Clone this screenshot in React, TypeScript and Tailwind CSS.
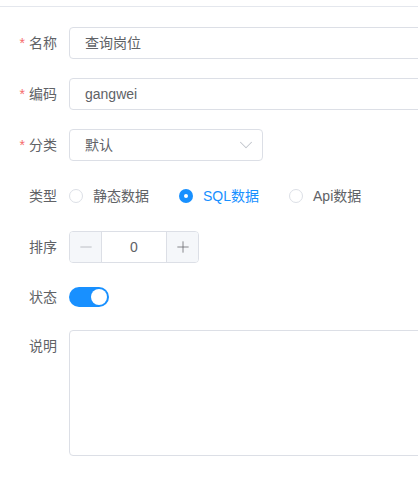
import { ChevronDown, Minus, Plus } from "lucide-react";

interface IFieldProps {
  label: string;
  required?: boolean;
  rowClass?: string;
  children: React.ReactNode;
}

const Field = ({ label, required = false, rowClass = "", children }: IFieldProps) => {
  return (
    <div className={`flex items-start mb-[19px] ${rowClass}`}>
      <label className="w-[69px] shrink-0 pr-3 text-right text-[14px] leading-[32px] text-[#606266]">
        {required && <span className="mr-1 text-[#f56c6c]">*</span>}
        {label}
      </label>
      <div className="flex-1 min-w-0">{children}</div>
    </div>
  );
};

const radios = ["静态数据", "SQL数据", "Api数据"];

export default function App() {
  const checked = "SQL数据";

  return (
    <div
      className="w-[418px] h-[482px] overflow-hidden bg-white"
      style={{ fontFamily: '"Helvetica Neue", "Liberation Sans", "Noto Sans CJK SC", sans-serif' }}
    >
      <div className="h-[7px] border-b border-[#e4e7ed]" />
      <div className="pt-5">
        <Field label="名称" required>
          <div className="w-[400px] h-8 rounded border border-[#dcdfe6] px-[15px] text-[14px] leading-[30px] text-[#606266]">
            查询岗位
          </div>
        </Field>

        <Field label="编码" required>
          <div className="w-[400px] h-8 rounded border border-[#dcdfe6] px-[15px] text-[14px] leading-[30px] text-[#606266]">
            gangwei
          </div>
        </Field>

        <Field label="分类" required>
          <div className="flex items-center justify-between w-[194px] h-8 rounded border border-[#dcdfe6] pl-[15px] pr-[5px] text-[14px] text-[#606266]">
            <span>默认</span>
            <ChevronDown size={22} strokeWidth={1.1} className="text-[#c0c4cc]" />
          </div>
        </Field>

        <Field label="类型">
          <div className="flex items-center h-8">
            {radios.map((item) => {
              const on = item === checked;
              return (
                <div key={item} className="flex items-center mr-[30px]">
                  {on ? (
                    <span className="grid place-content-center w-[14px] h-[14px] rounded-full bg-[#1890ff]">
                      <span className="w-1 h-1 rounded-full bg-white" />
                    </span>
                  ) : (
                    <span className="w-[14px] h-[14px] rounded-full border border-[#dcdfe6] bg-white" />
                  )}
                  <span
                    className={`pl-[10px] text-[14px] ${on ? "text-[#1890ff]" : "text-[#606266]"}`}
                  >
                    {item}
                  </span>
                </div>
              );
            })}
          </div>
        </Field>

        <Field label="排序">
          <div className="flex w-[130px] h-8 rounded border border-[#dcdfe6] overflow-hidden text-[#606266]">
            <div className="grid place-content-center w-8 bg-[#f5f7fa] border-r border-[#dcdfe6]">
              <Minus size={18} strokeWidth={1} className="text-[#a8abb2]" />
            </div>
            <div className="flex-1 text-center text-[14px] leading-[30px]">0</div>
            <div className="grid place-content-center w-8 bg-[#f5f7fa] border-l border-[#dcdfe6]">
              <Plus size={18} strokeWidth={1} className="text-[#606266]" />
            </div>
          </div>
        </Field>

        <Field label="状态" rowClass="h-[29px] !items-center">
          <div className="flex items-center">
            <div className="flex items-center justify-end w-10 h-5 rounded-full bg-[#1890ff] px-[2px]">
              <span className="w-4 h-4 rounded-full bg-white" />
            </div>
          </div>
        </Field>

        <Field label="说明">
          <div className="w-[400px] h-[126px] rounded border border-[#dcdfe6]" />
        </Field>
      </div>
    </div>
  );
}
